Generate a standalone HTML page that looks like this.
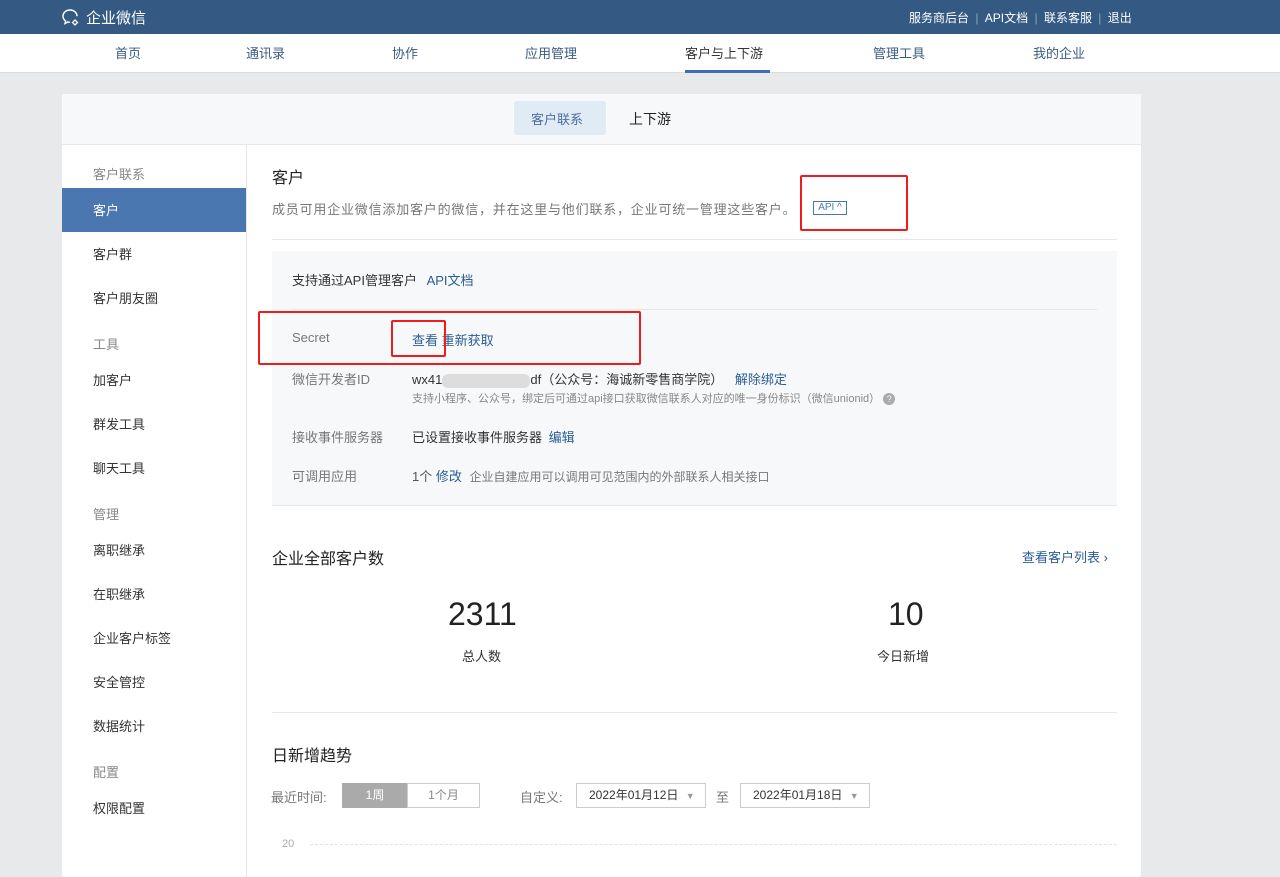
<!DOCTYPE html>
<html style="height:877px;overflow:hidden"><head><meta charset="utf-8"><style>
*{margin:0;padding:0;box-sizing:border-box}
body{width:1280px;height:877px;overflow:hidden;background:#e8e9eb;font-family:"Liberation Sans","Noto Sans CJK SC",sans-serif;font-size:13px;color:#333;position:relative}
.a{position:absolute;white-space:nowrap}
.top{position:absolute;left:0;top:0;width:1280px;height:34px;background:#345a84}
.nav{position:absolute;left:0;top:34px;width:1280px;height:39px;background:#fff;border-bottom:1px solid #dcdcdc}
.nav span{position:absolute;top:9px;font-size:13px;color:#3b5b82}
.card{position:absolute;left:62px;top:94px;width:1079px;height:783px;background:#fff;border-radius:3px}
.tabbar{position:absolute;left:62px;top:94px;width:1079px;height:51px;background:#f7f8fa;border-bottom:1px solid #e4e6e9}
.side{position:absolute;left:62px;top:145px;width:185px;height:732px;border-right:1px solid #e4e6e9}
.sg{color:#888;font-size:13px}
.si{color:#333;font-size:13px}
.blue{color:#2a5d94}
.g{color:#777}
.rb{position:absolute;border:2px solid #ee1c1c;border-radius:2px}
</style></head><body>
<div class="top"></div>
<svg class="a" style="left:61px;top:8px" width="22" height="20" viewBox="0 0 22 20"><path d="M9 2C5 2 2 4.8 2 8.2c0 2 1 3.6 2.6 4.7L4 15.5l3-1.6c.7.2 1.3.3 2 .3" fill="none" stroke="#fff" stroke-width="1.4"/><path d="M9 2c4 0 7 2.8 7 6.2" fill="none" stroke="#fff" stroke-width="1.4"/><path d="M14 12l2.5 2.5L14 17l-2.5-2.5z" fill="none" stroke="#fff" stroke-width="1.3"/></svg>
<div class="a" style="left:86px;top:7px;color:#fff;font-size:15px">企业微信</div>
<div class="a" style="left:909px;top:9px;color:#fff;font-size:12px;word-spacing:3px">服务商后台 <span style="color:#8aa">|</span> API文档 <span style="color:#8aa">|</span> 联系客服 <span style="color:#8aa">|</span> 退出</div>
<div class="nav">
<span style="left:115px">首页</span><span style="left:246px">通讯录</span><span style="left:392px">协作</span><span style="left:525px">应用管理</span>
<span style="left:685px;color:#333">客户与上下游</span><span style="left:873px">管理工具</span><span style="left:1033px">我的企业</span>
<div style="position:absolute;left:685px;top:36px;width:85px;height:3px;background:#3b6fb0"></div>
</div>
<div class="card"></div>
<div class="tabbar"></div>
<div class="a" style="left:514px;top:101px;width:92px;height:34px;background:#e1ebf6;border-radius:3px"></div>
<div class="a" style="left:531px;top:109px;color:#4a6fa0">客户联系</div>
<div class="a" style="left:629px;top:109px;color:#222;font-size:14px">上下游</div>
<div class="side"></div>
<div class="a sg" style="left:93px;top:164px">客户联系</div>
<div class="a" style="left:62px;top:188px;width:184px;height:44px;background:#4a77b0"></div>
<div class="a" style="left:93px;top:200px;color:#fff">客户</div>
<div class="a si" style="left:93px;top:244px">客户群</div>
<div class="a si" style="left:93px;top:288px">客户朋友圈</div>
<div class="a sg" style="left:93px;top:334px">工具</div>
<div class="a si" style="left:93px;top:370px">加客户</div>
<div class="a si" style="left:93px;top:414px">群发工具</div>
<div class="a si" style="left:93px;top:458px">聊天工具</div>
<div class="a sg" style="left:93px;top:504px">管理</div>
<div class="a si" style="left:93px;top:540px">离职继承</div>
<div class="a si" style="left:93px;top:584px">在职继承</div>
<div class="a si" style="left:93px;top:628px">企业客户标签</div>
<div class="a si" style="left:93px;top:672px">安全管控</div>
<div class="a si" style="left:93px;top:716px">数据统计</div>
<div class="a sg" style="left:93px;top:762px">配置</div>
<div class="a si" style="left:93px;top:798px">权限配置</div>

<div class="a" style="left:272px;top:164px;font-size:16px;color:#222">客户</div>
<div class="a g" style="left:272px;top:199px;letter-spacing:0.8px">成员可用企业微信添加客户的微信，并在这里与他们联系，企业可统一管理这些客户。</div>
<div class="a" style="left:813px;top:201px;width:34px;height:14px;border:1px solid #4a77b0;color:#4a77b0;font-size:10px;text-align:center;line-height:12px">API ^</div>
<div class="rb" style="left:800px;top:175px;width:108px;height:56px"></div>
<div class="a" style="left:272px;top:239px;width:845px;height:1px;background:#e4e6e9"></div>
<div class="a" style="left:272px;top:251px;width:845px;height:255px;background:#f7f8fa;border-bottom:1px solid #e4e6e9"></div>
<div class="a" style="left:292px;top:270px;color:#333">支持通过API管理客户 <span class="blue" style="margin-left:6px">API文档</span></div>
<div class="a" style="left:292px;top:309px;width:805px;height:1px;background:#e4e6e9"></div>
<div class="a g" style="left:292px;top:330px">Secret</div>
<div class="a blue" style="left:412px;top:330px">查看 重新获取</div>
<div class="rb" style="left:258px;top:311px;width:383px;height:54px"></div>
<div class="rb" style="left:391px;top:320px;width:55px;height:37px"></div>
<div class="a g" style="left:292px;top:369px">微信开发者ID</div>
<div class="a" style="left:412px;top:369px">wx41<span style="display:inline-block;width:88px;height:14px;background:#ddd;vertical-align:middle;border-radius:6px"></span>df（公众号：海诚新零售商学院） <span class="blue" style="margin-left:8px">解除绑定</span></div>
<div class="a" style="left:412px;top:390px;font-size:11px;color:#888">支持小程序、公众号，绑定后可通过api接口获取微信联系人对应的唯一身份标识（微信unionid） <span style="display:inline-block;width:12px;height:12px;border-radius:6px;background:#aaa;color:#fff;font-size:9px;text-align:center;line-height:12px">?</span></div>
<div class="a g" style="left:292px;top:427px">接收事件服务器</div>
<div class="a" style="left:412px;top:427px">已设置接收事件服务器 <span class="blue" style="margin-left:3px">编辑</span></div>
<div class="a g" style="left:292px;top:466px">可调用应用</div>
<div class="a" style="left:412px;top:466px;color:#555">1个 <span class="blue">修改</span> <span style="font-size:12px;color:#777;margin-left:4px">企业自建应用可以调用可见范围内的外部联系人相关接口</span></div>

<div class="a" style="left:272px;top:545px;font-size:16px;color:#222">企业全部客户数</div>
<div class="a blue" style="left:1022px;top:547px">查看客户列表 ›</div>
<div class="a" style="left:448px;top:596px;font-size:32px;color:#222">2311</div>
<div class="a" style="left:462px;top:646px">总人数</div>
<div class="a" style="left:888px;top:596px;font-size:32px;color:#222">10</div>
<div class="a" style="left:877px;top:646px">今日新增</div>
<div class="a" style="left:272px;top:712px;width:845px;height:1px;background:#e4e6e9"></div>
<div class="a" style="left:272px;top:742px;font-size:16px;color:#222">日新增趋势</div>
<div class="a g" style="left:271px;top:787px">最近时间:</div>
<div class="a" style="left:342px;top:783px;width:66px;height:25px;background:#aaa;color:#fff;text-align:center;line-height:25px;font-size:12px">1周</div>
<div class="a" style="left:407px;top:783px;width:73px;height:25px;border:1px solid #ccc;color:#888;text-align:center;line-height:23px;font-size:12px">1个月</div>
<div class="a g" style="left:520px;top:787px">自定义:</div>
<div class="a" style="left:576px;top:783px;width:130px;height:25px;border:1px solid #ccc;font-size:12px;line-height:23px;padding-left:12px">2022年01月12日 <span style="color:#999;font-size:9px;margin-left:4px">▼</span></div>
<div class="a g" style="left:716px;top:787px">至</div>
<div class="a" style="left:740px;top:783px;width:130px;height:25px;border:1px solid #ccc;font-size:12px;line-height:23px;padding-left:12px">2022年01月18日 <span style="color:#999;font-size:9px;margin-left:4px">▼</span></div>
<div class="a" style="left:282px;top:838px;font-size:11px;color:#aaa">20</div>
<div class="a" style="left:310px;top:844px;width:807px;border-top:1px dashed #e4e4e4"></div>
</body></html>
